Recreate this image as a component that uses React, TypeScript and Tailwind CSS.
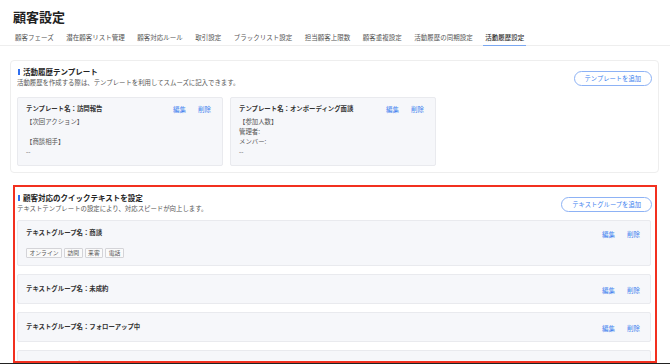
const tabs = [
  "顧客フェーズ",
  "潜在顧客リスト管理",
  "顧客対応ルール",
  "取引設定",
  "ブラックリスト設定",
  "担当顧客上限数",
  "顧客重複設定",
  "活動履歴の同期設定",
  "活動履歴設定",
];

const templates = [
  { name: "訪問報告", lines: ["【次回アクション】", "", "【商談相手】", "--"] },
  { name: "オンボーディング面談", lines: ["【参加人数】", "管理者:", "メンバー:", "--"] },
];

const groups = [
  { name: "商談", tags: ["オンライン", "訪問", "来客", "電話"] },
  { name: "未成約", tags: [] },
  { name: "フォローアップ中", tags: [] },
  { name: "アフターサービス", tags: [] },
];

function Links() {
  return (
    <div className="flex shrink-0 gap-[12px] text-[6.5px] leading-[10px] text-[#3d7fef]">
      <span>編集</span>
      <span>削除</span>
    </div>
  );
}

function SectionHead({ title, desc, action }: { title: string; desc: string; action: string }) {
  return (
    <div className="flex items-start justify-between">
      <div>
        <div className="flex items-center gap-[3px]">
          <span className="ml-[1px] h-[6px] w-[2px] bg-[#2f6ff0]" />
          <h2 className="text-[7.5px] font-bold leading-[10px] text-[#222]">{title}</h2>
        </div>
        <p className="mt-[2px] text-[6.4px] leading-[8px] text-[#555]">{desc}</p>
      </div>
      <button className="mt-[4px] flex h-[15px] items-center rounded-full border border-[#8db2f5] px-[10px] text-[6.3px] text-[#3d7fef]">
        {action}
      </button>
    </div>
  );
}

export default function App() {
  return (
    <div className="h-[364px] overflow-hidden border-b border-[#222] bg-white font-['Noto_Sans_CJK_JP','Noto_Sans',sans-serif]">
      <h1 className="px-[13px] pt-[9px] text-[13px] font-bold leading-[16px] text-[#222]">顧客設定</h1>

      <div className="mt-[7px] flex gap-[8.5px] border-b border-[#eeeeee] pl-[13px]">
        {tabs.map((t, i) => (
          <div
            key={t}
            className={
              "-mb-px px-[2px] pb-[3px] text-[6.5px] leading-[10px] " +
              (i === tabs.length - 1
                ? "border-b-[1.5px] border-[#7aa7f0] font-medium text-[#333]"
                : "border-b-[1.5px] border-transparent text-[#555]")
            }
          >
            {t}
          </div>
        ))}
      </div>

      <section className="mx-[10px] mt-[14px] w-[649px] rounded-[4px] border border-[#eeeeee] px-[6px] pt-[6px] pb-[6px]">
        <SectionHead
          title="活動履歴テンプレート"
          desc="活動履歴を作成する際は、テンプレートを利用してスムーズに記入できます。"
          action="テンプレートを追加"
        />
        <div className="mt-[10px] flex gap-[7px]">
          {templates.map((tp) => (
            <div
              key={tp.name}
              className="h-[69px] w-[206px] rounded-[2px] border border-[#e9eaee] bg-[#f6f7fa] px-[8px] pt-[6px]"
            >
              <div className="flex items-start justify-between pr-[3px]">
                <span className="text-[6.4px] font-semibold leading-[10px] text-[#333]">
                  テンプレート名：{tp.name}
                </span>
                <Links />
              </div>
              <div className="mt-[3px] text-[6.4px] leading-[10px] text-[#555]">
                {tp.lines.map((l, i) => (
                  <div key={i} className="h-[10px]">
                    {l}
                  </div>
                ))}
              </div>
            </div>
          ))}
        </div>
      </section>

      <section className="ml-[13px] mt-[12px] h-[178px] w-[644px] overflow-hidden border-2 border-[#f2301f] pt-[6px] pr-[3px] pl-[2px]">
        <SectionHead
          title="顧客対応のクイックテキストを設定"
          desc="テキストテンプレートの設定により、対応スピードが向上します。"
          action="テキストグループを追加"
        />
        <div className="mt-[7px] flex w-[634px] flex-col gap-[8px]">
          {groups.map((g) => (
            <div
              key={g.name}
              className={
                "rounded-[2px] border border-[#e9eaee] bg-[#f6f7fa] pr-[10px] pl-[8px] " +
                (g.tags.length ? "pt-[7px] pb-[7px]" : "flex h-[30px] items-center")
              }
            >
              <div className="flex w-full items-start justify-between">
                <span className="text-[6.4px] font-semibold leading-[10px] text-[#333]">
                  テキストグループ名：{g.name}
                </span>
                <div className="mt-[1px]">
                  <Links />
                </div>
              </div>
              {g.tags.length > 0 && (
                <div className="mt-[9px] flex gap-[2px]">
                  {g.tags.map((t) => (
                    <span
                      key={t}
                      className="flex h-[10px] items-center rounded-[1px] border border-[#d4d4d8] bg-[#fafafa] px-[2.5px] text-[5.8px] text-[#555]"
                    >
                      {t}
                    </span>
                  ))}
                </div>
              )}
            </div>
          ))}
        </div>
      </section>
    </div>
  );
}
